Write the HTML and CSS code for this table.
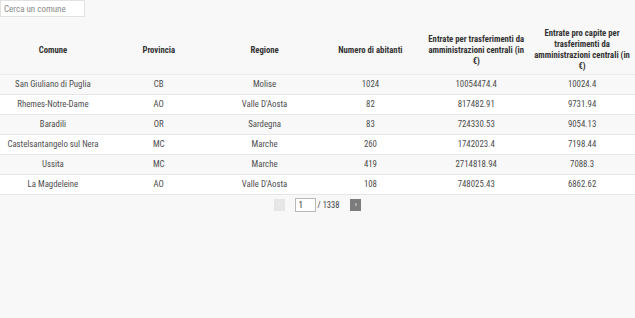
FILE: index.html
```html
<!DOCTYPE html>
<html lang="it">
<head>
<meta charset="utf-8">
<title>Comuni</title>
<link rel="stylesheet" href="styles.css">
</head>
<body>
<div class="page">
  <input class="search" type="text" placeholder="Cerca un comune">
  <table class="data">
    <thead>
      <tr>
        <th>Comune</th>
        <th>Provincia</th>
        <th>Regione</th>
        <th>Numero di abitanti</th>
        <th>Entrate per trasferimenti da amministrazioni centrali (in €)</th>
        <th>Entrate pro capite per trasferimenti da amministrazioni centrali (in €)</th>
      </tr>
    </thead>
    <tbody>
      <tr><td>San Giuliano di Puglia</td><td>CB</td><td>Molise</td><td>1024</td><td>10054474.4</td><td>10024.4</td></tr>
      <tr><td>Rhemes-Notre-Dame</td><td>AO</td><td>Valle D'Aosta</td><td>82</td><td>817482.91</td><td>9731.94</td></tr>
      <tr><td>Baradili</td><td>OR</td><td>Sardegna</td><td>83</td><td>724330.53</td><td>9054.13</td></tr>
      <tr><td>Castelsantangelo sul Nera</td><td>MC</td><td>Marche</td><td>260</td><td>1742023.4</td><td>7198.44</td></tr>
      <tr><td>Ussita</td><td>MC</td><td>Marche</td><td>419</td><td>2714818.94</td><td>7088.3</td></tr>
      <tr><td>La Magdeleine</td><td>AO</td><td>Valle D'Aosta</td><td>108</td><td>748025.43</td><td>6862.62</td></tr>
    </tbody>
  </table>
  <div class="pager">
    <button class="pg-btn pg-prev" type="button">‹</button>
    <input class="pg-input" type="text" value="1">
    <span class="pg-total">/ 1338</span>
    <button class="pg-btn pg-next" type="button">›</button>
  </div>
</div>
</body>
</html>
```

FILE: styles.css
```css
html, body {
  margin: 0;
  padding: 0;
  background: #f8f8f8;
}
body {
  font-family: "Roboto Condensed", "Liberation Sans Narrow", "DejaVu Sans Condensed", Roboto, sans-serif;
  font-stretch: condensed;
  color: #4d4d4d;
  font-size: 8.8px;
}
.page {
  width: 635px;
}
.search {
  display: block;
  box-sizing: border-box;
  width: 85px;
  height: 17px;
  margin: 0 0 8px 0;
  padding: 0 3px;
  border: 1px solid #e2e2e2;
  background: #fff;
  font: inherit;
  font-size: 9px;
  color: #444;
}
.search::placeholder {
  color: #8a8a8a;
}
.data {
  width: 635px;
  border-collapse: collapse;
  table-layout: fixed;
}
.data th {
  font-weight: bold;
  font-size: 8.7px;
  color: #333;
  line-height: 11px;
  padding: 3px 4px 2px;
  text-align: center;
  vertical-align: middle;
  border-bottom: 1px solid #ececec;
}
.data td {
  text-align: center;
  line-height: 11px;
  padding: 4px 4px 4px;
  border-bottom: 1px solid #e6e6e6;
}
.data tbody tr:nth-child(even) {
  background: #fff;
}
.pager {
  display: flex;
  justify-content: center;
  align-items: center;
  margin-top: 2px;
  height: 15px;
}
.pg-btn {
  box-sizing: border-box;
  width: 11px;
  height: 12px;
  padding: 0;
  border: none;
  font: inherit;
  font-size: 8px;
  line-height: 12px;
  color: #fff;
}
.pg-prev {
  background: #e6e6e6;
  color: #f4f4f4;
  margin-right: 10px;
}
.pg-next {
  background: #7c7c7c;
  margin-left: 11px;
}
.pg-input {
  box-sizing: border-box;
  width: 21px;
  height: 14px;
  padding: 0 3px;
  border: 1px solid #b8b8b8;
  background: #fff;
  font: inherit;
  font-size: 9px;
  color: #333;
}
.pg-total {
  margin-left: 2px;
  font-size: 8.5px;
  color: #444;
}
```
